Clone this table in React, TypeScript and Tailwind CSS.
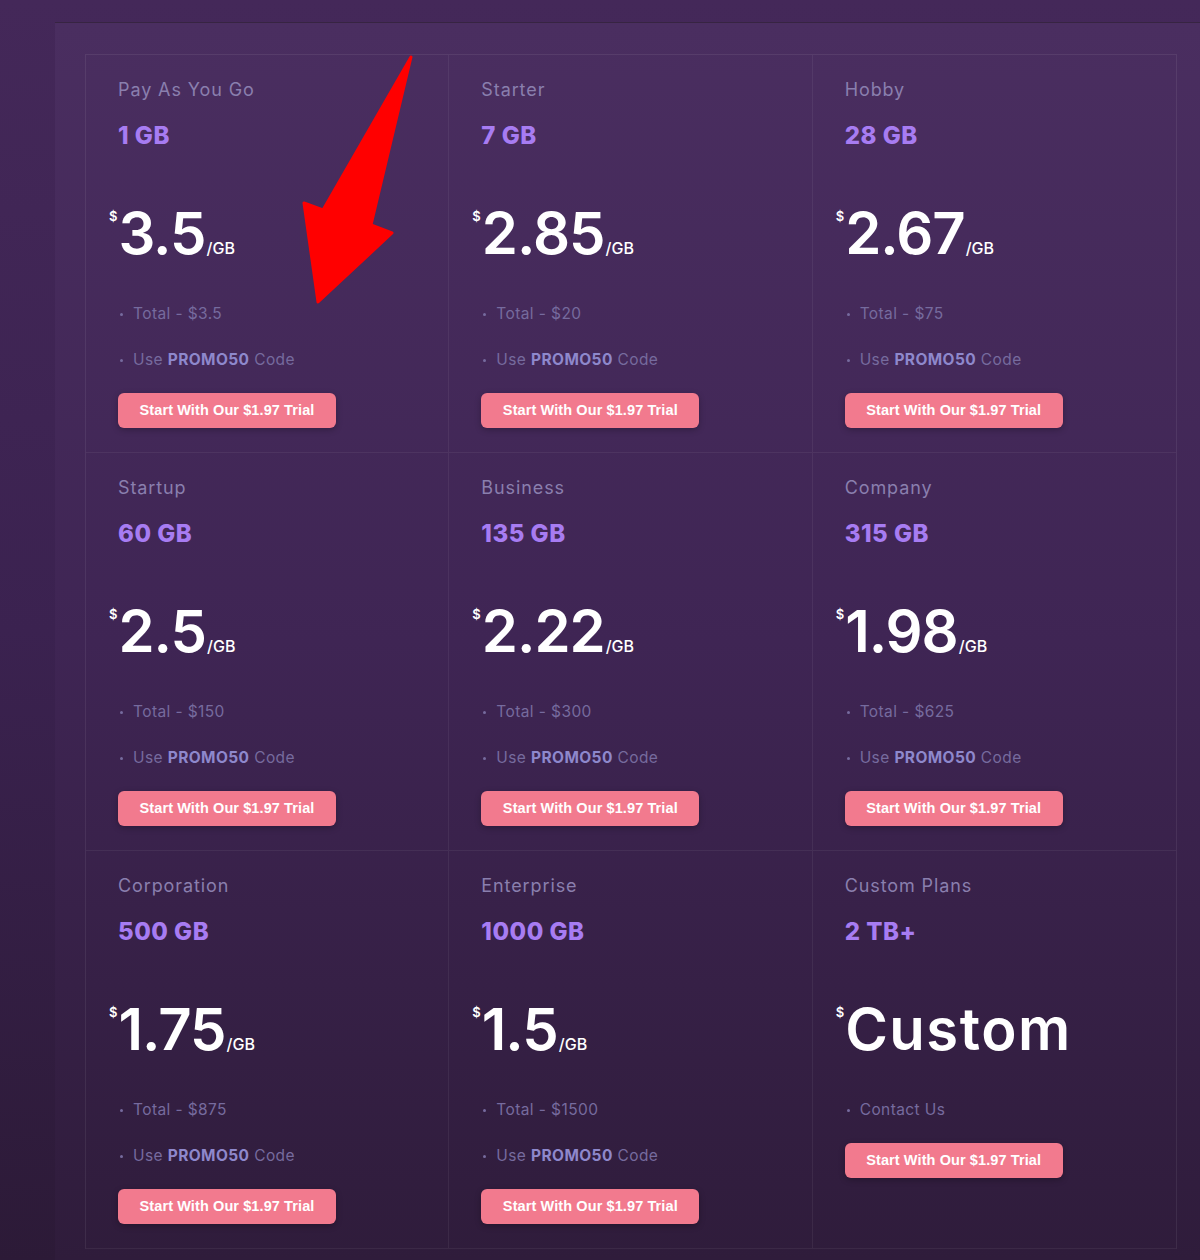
import React from "react";

type Plan = {
  name: string;
  size: string;
  price: string;
  total?: string;
  contact?: boolean;
};

const plans: Plan[] = [
  { name: "Pay As You Go", size: "1 GB", price: "3.5", total: "$3.5" },
  { name: "Starter", size: "7 GB", price: "2.85", total: "$20" },
  { name: "Hobby", size: "28 GB", price: "2.67", total: "$75" },
  { name: "Startup", size: "60 GB", price: "2.5", total: "$150" },
  { name: "Business", size: "135 GB", price: "2.22", total: "$300" },
  { name: "Company", size: "315 GB", price: "1.98", total: "$625" },
  { name: "Corporation", size: "500 GB", price: "1.75", total: "$875" },
  { name: "Enterprise", size: "1000 GB", price: "1.5", total: "$1500" },
  { name: "Custom Plans", size: "2 TB+", price: "Custom", contact: true },
];

const Bullet: React.FC<{ children: React.ReactNode }> = ({ children }) => (
  <li className="flex items-center h-[24px] text-[15.5px] tracking-[0.4px] text-[#766b9e]">
    <span className="w-[3px] h-[3px] rounded-full bg-[#766b9e] ml-[2px] mr-[10px]" />
    <span>{children}</span>
  </li>
);

const PlanCell: React.FC<{ plan: Plan; col: number }> = ({ plan, col }) => {
  const custom = plan.price === "Custom";
  return (
    <div
      className={`h-[398px] pl-[32px] pt-[21px] border-b border-white/[0.06] ${
        col < 2 ? "border-r" : ""
      }`}
    >
      <div className="text-[18px] leading-[28px] text-[#8a7fae] tracking-[0.9px]">{plan.name}</div>
      <div className="mt-[16px] text-[24px] leading-[32px] font-extrabold tracking-[0.5px] text-[#a77cf2]">
        {plan.size}
      </div>
      <div className="mt-[49px] -ml-[9px] flex items-baseline text-white h-[64px]">
        <span className="self-start mt-[6px] text-[13px] font-semibold mr-[1px]">$</span>
        <span
          className={`text-[58px] leading-[64px] font-semibold ${
            custom ? "tracking-[1.5px]" : "tracking-[-1px]"
          }`}
        >
          {plan.price}
        </span>
        {!custom && <span className="text-[16px] font-medium ml-[1px]">/GB</span>}
      </div>
      <ul className="mt-[37px] flex flex-col gap-[22px]">
        {plan.contact ? (
          <Bullet>Contact Us</Bullet>
        ) : (
          <>
            <Bullet>Total - {plan.total}</Bullet>
            <Bullet>
              Use <span className="font-bold text-[#8e88cc]">PROMO50</span> Code
            </Bullet>
          </>
        )}
      </ul>
      <button
        className="mt-[21px] h-[35px] w-[218px] rounded-[6px] bg-[#f27a8e] text-white text-[14.5px] font-bold tracking-[0.1px] shadow-[0_2px_6px_rgba(0,0,0,0.25)]"
        style={{ fontFamily: '"Liberation Sans", Arial, sans-serif' }}
      >
        Start With Our $1.97 Trial
      </button>
    </div>
  );
};

const App: React.FC = () => {
  return (
    <div
      className="relative w-[1200px] h-[1260px] overflow-hidden bg-gradient-to-b from-[#442859] via-[#3b2250] to-[#2c1a37]"
      style={{ fontFamily: 'Inter, "Open Sans", sans-serif' }}
    >
      <div className="ml-[55px] mt-[22px] h-[1238px] bg-gradient-to-b from-[#4a2e60] via-[#3f2554] to-[#2f1c3b] border-t border-white/[0.04]">
        <div className="ml-[30px] pt-[31px] w-[1092px]">
          <div className="grid grid-cols-3 border-t border-l border-r border-white/[0.07]">
            {plans.map((p, i) => (
              <PlanCell key={p.name} plan={p} col={i % 3} />
            ))}
          </div>
        </div>
      </div>

      {/* red annotation arrow */}
      <svg className="absolute left-0 top-0 pointer-events-none" width="1200" height="1260">
        <polygon
          points="411,57 371,225 392,233 318,302 304,203 323,210"
          fill="#ff0000"
          stroke="#ff0000"
          strokeWidth="3"
          strokeLinejoin="round"
        />
      </svg>
    </div>
  );
};

export default App;
